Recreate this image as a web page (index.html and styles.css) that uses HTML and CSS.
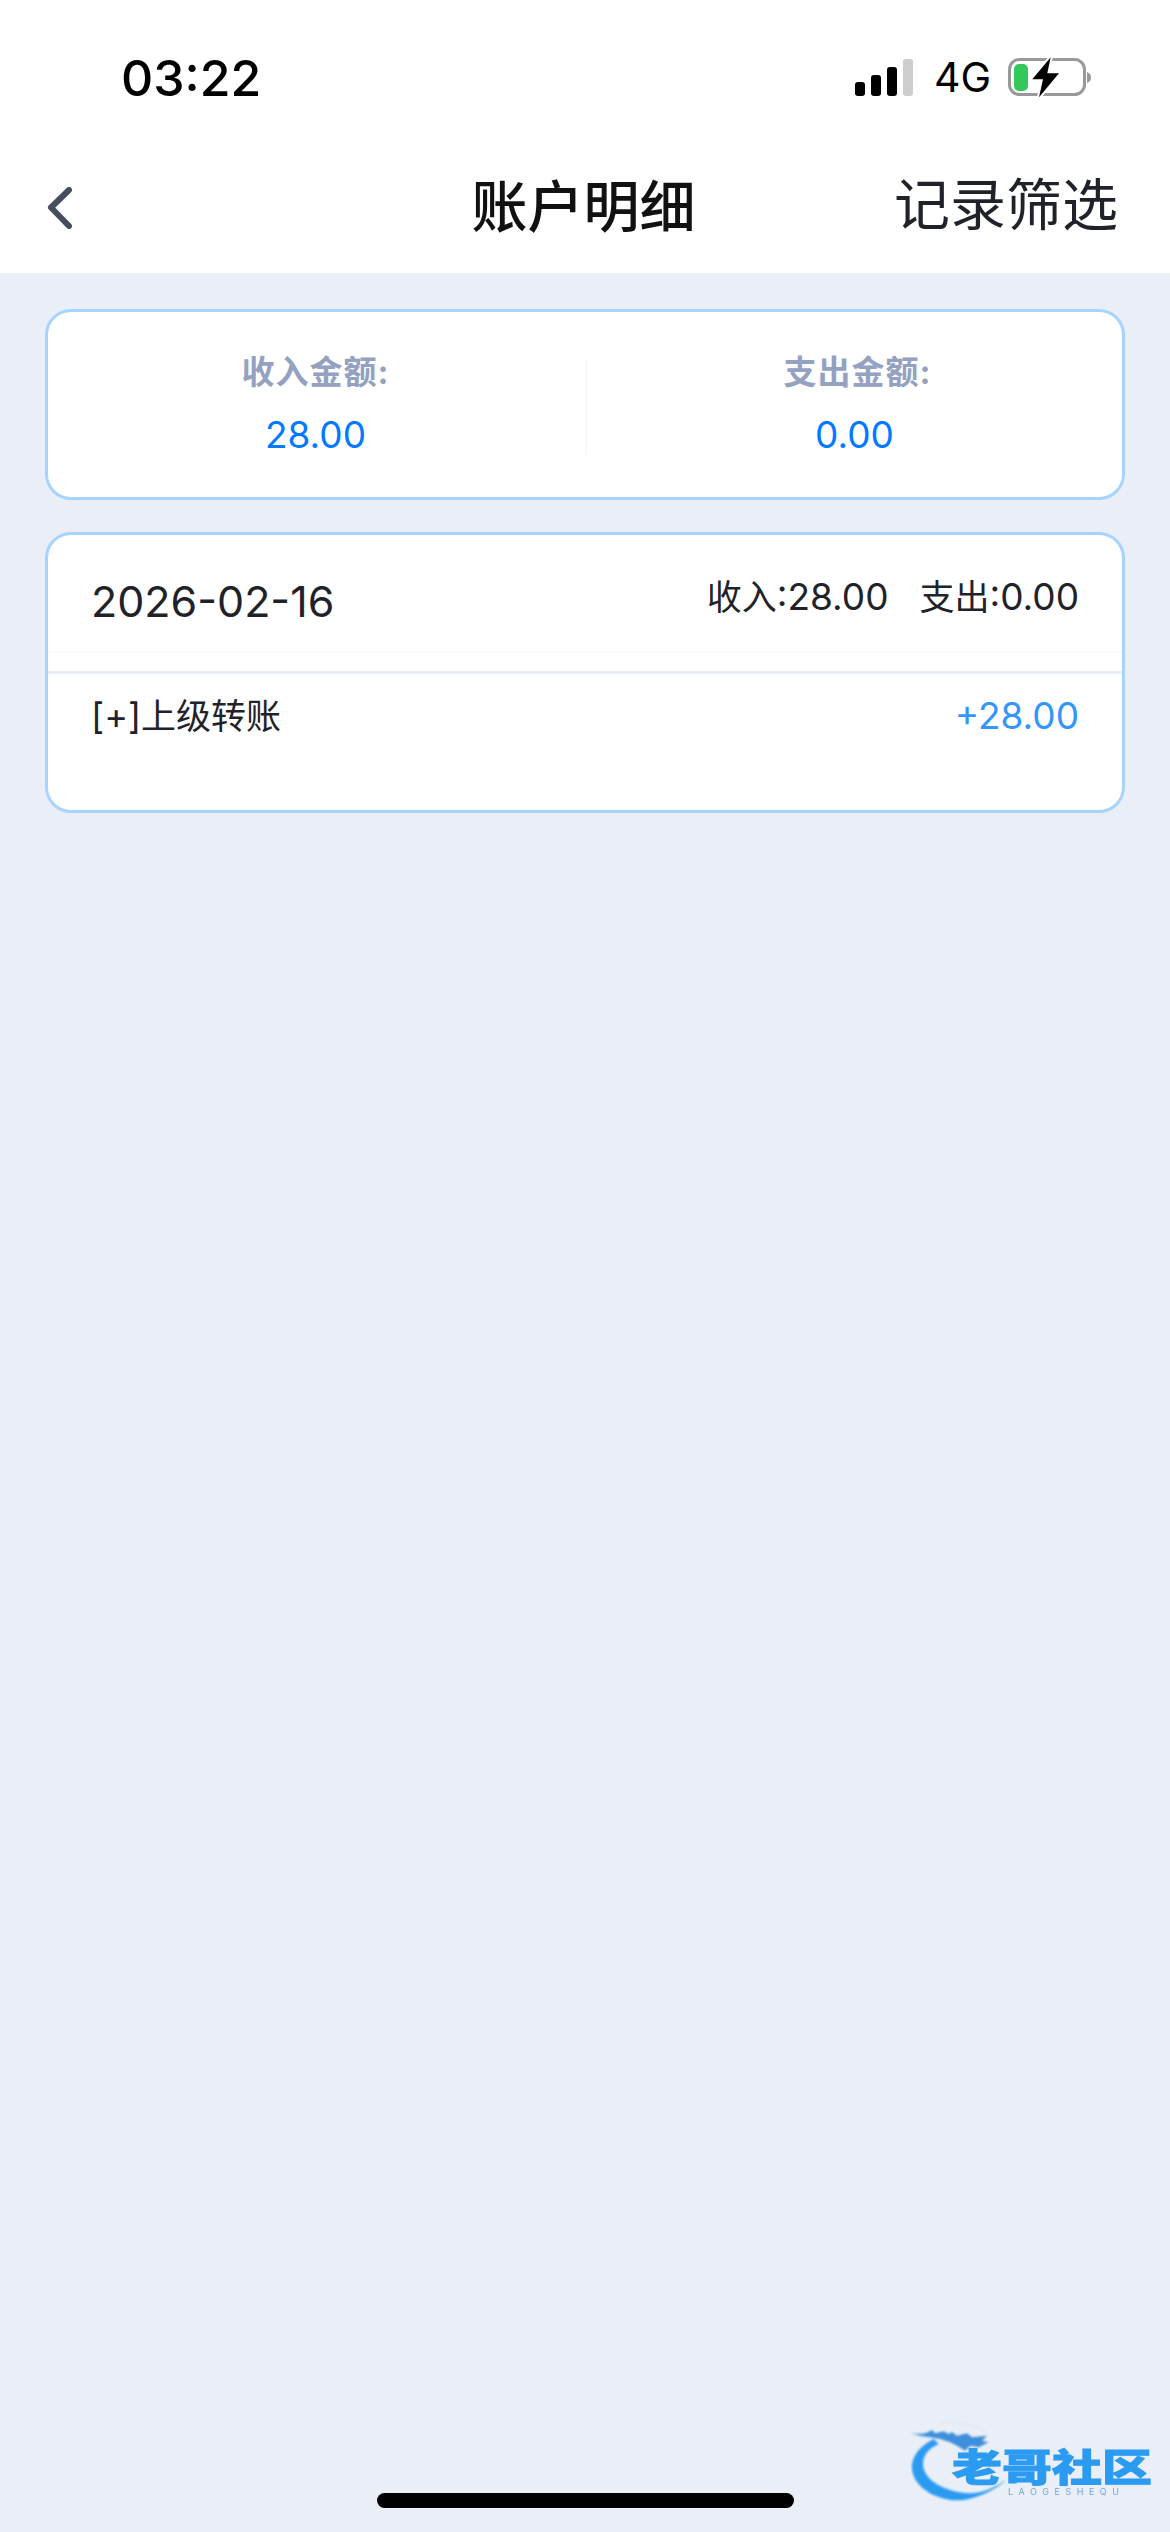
FILE: index.html
```html
<!DOCTYPE html>
<html lang="zh-CN">
<head>
<meta charset="utf-8">
<title>账户明细</title>
<link rel="stylesheet" href="styles.css">
</head>
<body>
<div class="page">
  <header class="top">
    <div class="status">
      <span class="time">03:22</span>
      <div class="status-right">
        <svg class="signal" width="58" height="38" viewBox="0 0 58 38">
          <rect x="0" y="24" width="10" height="14" rx="3" fill="#000"/>
          <rect x="16" y="17" width="10" height="21" rx="3" fill="#000"/>
          <rect x="32" y="9" width="10" height="29" rx="3" fill="#000"/>
          <rect x="48" y="1" width="10" height="37" rx="3" fill="#cdcdcd"/>
        </svg>
        <span class="net">4G</span>
        <svg class="battery" width="83" height="42" viewBox="0 0 83 42">
          <rect x="1.5" y="3.5" width="75" height="35" rx="10" fill="none" stroke="#999" stroke-width="3"/>
          <path d="M79 16c3 1 4 3 4 5.500s-1 4.500-4 5.500z" fill="#999"/>
          <rect x="6" y="8" width="14" height="27" rx="5" fill="#34c759"/>
          <path d="M42.700 1.300 L24.300 23.300 L35 23.300 L31 41.300 L51 17.300 L39.300 17.300 Z" fill="#000" stroke="#fff" stroke-width="4" paint-order="stroke" stroke-linejoin="round"/>
        </svg>
      </div>
    </div>
    <nav class="nav">
      <svg class="back" width="26" height="42" viewBox="0 0 26 42">
        <path d="M22 3 L4 20.500 L22 39" fill="none" stroke="#474d5c" stroke-width="6" stroke-linecap="round" stroke-linejoin="round"/>
      </svg>
      <h1 class="title">账户明细</h1>
      <span class="filter">记录筛选</span>
    </nav>
  </header>

  <main class="content">
    <section class="card summary">
      <div class="sum-col">
        <div class="sum-label">收入金额:</div>
        <div class="sum-value">28.00</div>
      </div>
      <div class="sum-col sum-col-right">
        <div class="sum-label">支出金额:</div>
        <div class="sum-value">0.00</div>
      </div>
    </section>

    <section class="card detail">
      <div class="day">
        <span class="date">2026-02-16</span>
        <div class="totals">
          <span><span class="cjk">收入</span>:28.00</span>
          <span><span class="cjk">支出</span>:0.00</span>
        </div>
      </div>
      <div class="gap-row"></div>
      <div class="entry">
        <span class="entry-name">[+]<span class="cjk">上级转账</span></span>
        <span class="entry-amt">+28.00</span>
      </div>
    </section>
  </main>

  <div class="watermark">
    <svg class="wm-dragon" width="100" height="84" viewBox="0 0 300 250">
      <path d="M100 15 C150 12 210 25 240 45" fill="none" stroke="#d5e3f5" stroke-width="3"/>
      <path d="M80 65 C30 90 5 130 18 170 C35 225 110 255 170 248 C220 240 270 215 300 185 C260 215 210 235 160 225 C100 215 50 185 48 140 C48 110 70 90 95 80 Z" fill="#2b9bf2"/>
      <path d="M10 45 C30 52 55 52 75 38 L85 48 L110 42 L125 50 L135 44 L150 55 L180 48 L195 60 L240 55 L225 70 L245 75 L215 90 L190 85 L175 100 L150 85 L130 75 L100 65 L60 58 C40 58 25 52 10 45 Z" fill="#3f8fdc"/>
    </svg>
    <div class="wm-text">
      <div class="wm-cn">老哥社区</div>
      <div class="wm-en">LAOGESHEQU</div>
    </div>
  </div>
  <div class="home-bar"></div>
</div>
</body>
</html>
```
FILE: styles.css
```css
* { box-sizing: border-box; margin: 0; padding: 0; }
html, body { width: 1170px; height: 2532px; overflow: hidden; }
body {
  font-family: Inter, "Noto Sans CJK SC", sans-serif;
  color: #1f2329;
  background: #eaeff7;
}
.page { position: relative; width: 1170px; height: 2532px; }

.top { height: 273px; background: #fff; }
.status {
  height: 143px;
  padding: 44px 0 0 121px;
  display: flex;
  justify-content: space-between;
  align-items: flex-start;
}
.time { font-size: 50px; line-height: 68px; font-weight: 500; color: #000; }
.status-right { display: flex; align-items: center; height: 58px; margin-top: 4px; padding-right: 79px; }
.net { font-size: 41px; line-height: 50px; color: #000; margin-left: 21px; margin-right: 17px; }
.nav {
  height: 130px;
  padding: 0 52px 6px 47px;
  display: grid;
  grid-template-columns: 1fr auto 1fr;
  align-items: center;
}
.back { margin-top: 6px; }
.title {
  font-size: 56px;
  font-weight: 500;
  color: #111;
  line-height: 70px;
  margin: 3px 0 0 2px;
}
.filter { font-size: 56px; line-height: 70px; color: #1f2329; justify-self: end; }

.content { padding: 36px 45px 0 45px; display: flex; flex-direction: column; gap: 32px; }
.card {
  background: #fff;
  border: 3px solid #a6d4ff;
  border-radius: 26px;
}
.summary { height: 191px; display: flex; padding-top: 40px; }
.sum-col { flex: 1; text-align: center; height: 95px; margin-top: 8px; padding-right: 2px; }
.sum-col-right { border-left: 2px solid #f8f9fb; padding-right: 0; }
.sum-label { font-size: 33px; line-height: 40px; font-weight: 700; color: #94a1c0; letter-spacing: 1px; margin-top: -8px; }
.sum-col-right .sum-label { padding-left: 6px; }
.sum-value { font-size: 37px; line-height: 46px; color: #007aff; margin-top: 20px; }

.detail { height: 281px; }
.day {
  height: 118px;
  padding: 0 43px;
  display: flex;
  justify-content: space-between;
  align-items: center;
  border-bottom: 2px solid #f9fafc;
}
.date { font-size: 43px; line-height: 56px; margin-top: 16px; }
.totals { display: flex; gap: 31px; font-size: 37px; line-height: 48px; margin-top: 8px; }
.cjk { font-size: 35px; }
.gap-row { height: 21px; border-bottom: 3px solid #e9edf6; }
.entry { display: flex; justify-content: space-between; padding: 18px 43px 0; font-size: 36px; line-height: 48px; }
.entry-amt { color: #3296fa; font-size: 37px; }

.watermark {
  position: absolute;
  left: 907px;
  top: 2417px;
  width: 245px;
  height: 84px;
}
.wm-dragon { position: absolute; left: 0; top: 0; filter: blur(0.8px); }
.wm-text { position: absolute; left: 45px; top: 30px; width: 200px; filter: blur(0.7px); }
.wm-cn {
  font-size: 50px;
  line-height: 40px;
  font-weight: 900;
  color: #2b9bf2;
  -webkit-text-stroke: 1.2px #2b9bf2;
  white-space: nowrap;
  transform: scaleY(0.76);
  transform-origin: 0 50%;
}
.wm-en { font-size: 9px; line-height: 12px; letter-spacing: 5.500px; color: #6fa6e2; padding-left: 56px; white-space: nowrap; margin-top: -1px; }

.home-bar {
  position: absolute;
  left: 377px;
  top: 2493px;
  width: 417px;
  height: 15px;
  border-radius: 8px;
  background: #000;
}
```
